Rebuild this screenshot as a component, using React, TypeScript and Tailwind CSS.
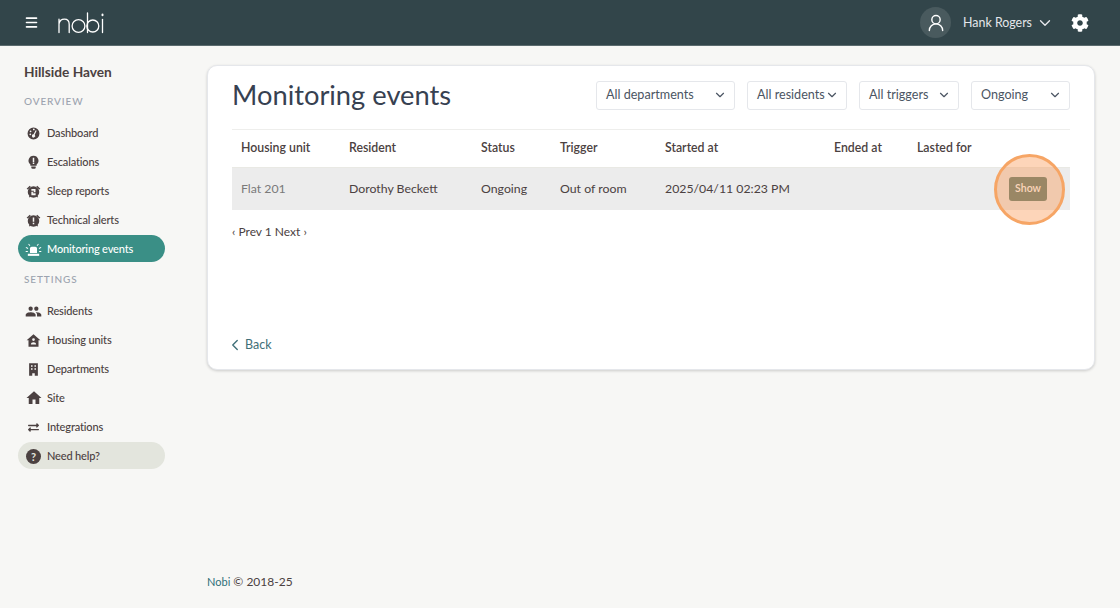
import React from "react";
import { MdPeople, MdHome } from "react-icons/md";
import { FaCog, FaExchangeAlt } from "react-icons/fa";
import { ChevronDown, ChevronLeft, Menu, UserRound } from "lucide-react";

const Dash = () => (
  <svg viewBox="0 0 24 24" className="w-[13px] h-[13px]" fill="currentColor">
    <path fillRule="evenodd" d="M12 1a11 11 0 1 0 0 22 11 11 0 0 0 0-22zm-1 3.5a1.6 1.6 0 1 1 3.2 0 1.6 1.6 0 0 1-3.2 0zM5 8a1.6 1.6 0 1 1 3.2 0A1.6 1.6 0 0 1 5 8zm-.5 5.5a1.6 1.6 0 1 1 3.2 0 1.6 1.6 0 0 1-3.2 0zM17.8 7l-3.6 7.3a3 3 0 1 1-2-.9L16 6.2z" />
  </svg>
);
const Bulb = () => (
  <svg viewBox="0 0 24 24" className="w-[15px] h-[15px]" fill="currentColor">
    <path fillRule="evenodd" d="M12 1a8 8 0 0 0-5 14.2V17h10v-1.8A8 8 0 0 0 12 1zm-1.2 3.5h2.4v6.5h-2.4zm0 7.5h2.4v2.2h-2.4z" />
    <path d="M8.5 18.5h7V20a2 2 0 0 1-2 2h-3a2 2 0 0 1-2-2z" />
  </svg>
);
const Alarm = ({ mark }: { mark: string }) => (
  <svg viewBox="0 0 24 24" className="w-[15px] h-[15px]" fill="currentColor">
    <path d="M1 7.5 6 2.600l1.600 1.700L3 8.800zM23 7.500 18 2.600l-1.600 1.700L21 8.800z" />
    <path fillRule="evenodd" d="M12 3.600a9.200 9.200 0 1 0 0 18.400 9.200 9.200 0 0 0 0-18.400z" />
    <path d="M4.600 20.200l2-2 1.500 1.500-2 2zM19.400 20.200l-2-2-1.500 1.500 2 2z" />
    {mark === "!" ? (
      <path d="M10.800 7h2.400v7h-2.400zM10.800 15.400h2.400v2.400h-2.400z" fill="#f7f7f5" />
    ) : (
      <path d="M8.600 8h6.600v5.200h-4.200v1.600h4.400V17.800H8.600v-5.600h4.200v-1.600H8.600z" fill="#f7f7f5" />
    )}
  </svg>
);
const Siren = () => (
  <svg viewBox="0 0 24 24" className="w-[17px] h-[17px]" fill="currentColor">
    <path d="M7 10.500A2.500 2.500 0 0 1 9.500 8h5a2.500 2.500 0 0 1 2.500 2.500V17H7z" />
    <path d="M4 18h16v3H4z" />
    <path d="M1.500 8.500 4.600 10l-.6 1.200-3.100-1.500zM22.500 8.500 19.400 10l.6 1.200 3.100-1.500zM5.500 3.800l2 2.600-1 .8-2-2.600zM18.500 3.800l-2 2.600 1 .8 2-2.600zM1 14h3v1.400H1zM20 14h3v1.400h-3z" />
  </svg>
);
const HouseUser = () => (
  <svg viewBox="0 0 24 24" className="w-[15px] h-[15px]" fill="currentColor">
    <path fillRule="evenodd" d="M12 2 1 11.500h3V22h16V11.500h3zm0 6.200a2.200 2.200 0 1 1 0 4.400 2.200 2.200 0 0 1 0-4.400zM7.800 18.500c0-2.200 2-3.600 4.200-3.600s4.200 1.400 4.200 3.600z" />
  </svg>
);
const Building = () => (
  <svg viewBox="0 0 24 24" className="w-[15px] h-[15px]" fill="currentColor">
    <path fillRule="evenodd" d="M5 2h14v20h-5v-4h-4v4H5zm3 3v2.500h2.500V5zm5.500 0v2.500H16V5zM8 10v2.500h2.500V10zm5.500 0v2.500H16V10z" />
  </svg>
);
const Help = () => (
  <span className="w-[15px] h-[15px] rounded-full bg-[#4b4141] text-[#e3e5dd] flex items-center justify-center text-[11px] font-bold leading-none">?</span>
);

const Logo = () => (
  <svg width="46" height="22" viewBox="0 0 46 22" fill="none" stroke="#ffffff" strokeWidth="1.3" strokeLinecap="round">
    <path d="M1 20.500V7.200M1 12c.6-3.200 2.800-4.900 5.400-4.900 3 0 4.800 1.900 4.800 5.200v8.200" />
    <circle cx="20.500" cy="14" r="6.400" />
    <path d="M29.500 1v19.500" />
    <circle cx="34.800" cy="14" r="6" />
    <path d="M44.500 7.500v13" />
    <path d="M44.500 2.600v.6" strokeWidth="2" />
  </svg>
);

const top = [
  { label: "Dashboard", icon: <Dash /> },
  { label: "Escalations", icon: <Bulb /> },
  { label: "Sleep reports", icon: <Alarm mark="2" /> },
  { label: "Technical alerts", icon: <Alarm mark="!" /> },
];
const settings = [
  { label: "Residents", icon: <MdPeople size={17} /> },
  { label: "Housing units", icon: <HouseUser /> },
  { label: "Departments", icon: <Building /> },
  { label: "Site", icon: <MdHome size={18} /> },
  { label: "Integrations", icon: <FaExchangeAlt size={11} /> },
];

const NavItem = ({ label, icon, className = "text-[#4b4141]" }: { label: string; icon: React.ReactNode; className?: string }) => (
  <div className={`h-[27px] pt-px flex items-center rounded-full text-[11px] tracking-[-0.15px] font-medium ${className}`}>
    <span className="w-[27px] ml-[2px] flex justify-center shrink-0">{icon}</span>
    <span>{label}</span>
  </div>
);

const Select = ({ label, w }: { label: string; w: string }) => (
  <div className={`${w} h-[29px] border border-[#e5e7eb] rounded-[3px] flex items-center justify-between pl-[8px] pr-[7px] text-[12.600px] text-[#4b5563] bg-white`}>
    <span className="pl-px pt-px">{label}</span>
    <ChevronDown size={14} strokeWidth={2} />
  </div>
);

const heads = ["Housing unit", "Resident", "Status", "Trigger", "Started at", "Ended at", "Lasted for", ""];

export default function App() {
  return (
    <div className="w-[1120px] h-[608px] bg-[#f7f7f5] overflow-hidden flex flex-col font-['Lato','Liberation_Sans',sans-serif] text-[#4b4141]">
      <header className="h-[46px] bg-[#32454a] flex items-center shrink-0 border-b border-[#5b6b6e]">
        <Menu size={15} strokeWidth={2.6} color="#fff" className="ml-[24px]" />
        <span className="ml-[19px] flex items-center"><Logo /></span>
        <div className="ml-auto flex items-center text-[#e5e7eb]">
          <div className="w-[31px] h-[31px] rounded-full bg-[#495a5e] flex items-center justify-center">
            <UserRound size={20} strokeWidth={1.7} color="#fff" />
          </div>
          <span className="ml-[12px] mt-[2px] text-[12.400px]">Hank Rogers</span>
          <ChevronDown size={18} strokeWidth={1.8} className="ml-[4px]" />
          <FaCog size={18} color="#fff" className="ml-[17px] mr-[31px]" />
        </div>
      </header>
      <div className="flex flex-1 min-h-0">
        <aside className="w-[207px] shrink-0 pl-[18px] pr-[42px] flex flex-col">
          <div className="pl-[6px] mt-[16px] text-[13.700px] leading-[20px] font-bold text-[#4b4141]">Hillside Haven</div>
          <div className="pl-[6px] mt-[11px] text-[10px] leading-[16px] font-medium tracking-[0.09em] text-[#9ca3af]">OVERVIEW</div>
          <nav className="mt-[10px] flex flex-col gap-[2px]">
            {top.map((i) => <NavItem key={i.label} {...i} />)}
            <NavItem label="Monitoring events" icon={<Siren />} className="bg-[#3a8f86] text-white" />
          </nav>
          <div className="pl-[6px] mt-[9px] text-[10px] leading-[16px] font-medium tracking-[0.09em] text-[#9ca3af]">SETTINGS</div>
          <nav className="mt-[10px] flex flex-col gap-[2px]">
            {settings.map((i) => <NavItem key={i.label} {...i} />)}
            <NavItem label="Need help?" icon={<Help />} className="bg-[#e3e5dd] text-[#4b4141]" />
          </nav>
        </aside>
        <main className="flex-1 pr-[25px] pt-[19px] flex flex-col">
          <section className="relative h-[305px] bg-white rounded-[10px] border border-[#e5e7eb] shadow-[0_1px_3px_rgba(0,0,0,0.18)] px-[24px] flex flex-col">
            <div className="h-[64px] flex items-center justify-between border-b border-[#eeeeec] shrink-0">
              <h1 className="text-[27.300px] leading-[36px] text-[#374151] -mt-[5px]">Monitoring events</h1>
              <div className="flex gap-[12px] -mt-[5px]">
                <Select label="All departments" w="w-[139px]" />
                <Select label="All residents" w="w-[100px]" />
                <Select label="All triggers" w="w-[100px]" />
                <Select label="Ongoing" w="w-[99px]" />
              </div>
            </div>
            <table className="w-[838px] table-fixed border-collapse text-[12.300px]">
              <colgroup>
                <col className="w-[108px]" /><col className="w-[132px]" /><col className="w-[79px]" /><col className="w-[105px]" />
                <col className="w-[169px]" /><col className="w-[83px]" /><col className="w-[85px]" /><col className="w-[77px]" />
              </colgroup>
              <thead>
                <tr className="h-[37px] border-b border-[#e9e9e4]">
                  {heads.map((h, i) => <th key={i} className="text-left font-semibold pl-[9px] text-[#4b4141]">{h}</th>)}
                </tr>
              </thead>
              <tbody>
                <tr className="h-[43px] bg-[#ececec] text-[#4b4141]">
                  <td className="pl-[9px] text-[#7a7a7a]">Flat 201</td>
                  <td className="pl-[9px]">Dorothy Beckett</td>
                  <td className="pl-[9px]">Ongoing</td>
                  <td className="pl-[9px]">Out of room</td>
                  <td className="pl-[9px] whitespace-nowrap">2025/04/11 02:23 PM</td>
                  <td />
                  <td />
                  <td className="pl-[16px]">
                    <div className="w-[38px] h-[24px] mt-px rounded-[3px] bg-[#5a7d73] text-white text-[10.500px] font-semibold flex items-center justify-center">Show</div>
                  </td>
                </tr>
              </tbody>
            </table>
            <div className="mt-[13px] text-[12px] leading-[18px] text-[#4b4141]">‹ Prev 1 Next ›</div>
            <div className="mt-[95px] flex items-center text-[12.500px] text-[#3f6f78]">
              <ChevronLeft size={18} strokeWidth={1.8} className="-ml-[6px]" />
              <span className="ml-[1px]">Back</span>
            </div>
            <div className="absolute left-[786px] top-[88px] w-[71px] h-[71px] rounded-full bg-[#fa9650]/40 border-[3px] border-[#f6a565]" />
          </section>
          <footer className="mt-[203px] text-[12px] leading-[18px] text-[#4b4141]">
            <span className="text-[11px] text-[#2f6f78]">Nobi</span> © 2018-25
          </footer>
        </main>
      </div>
    </div>
  );
}
